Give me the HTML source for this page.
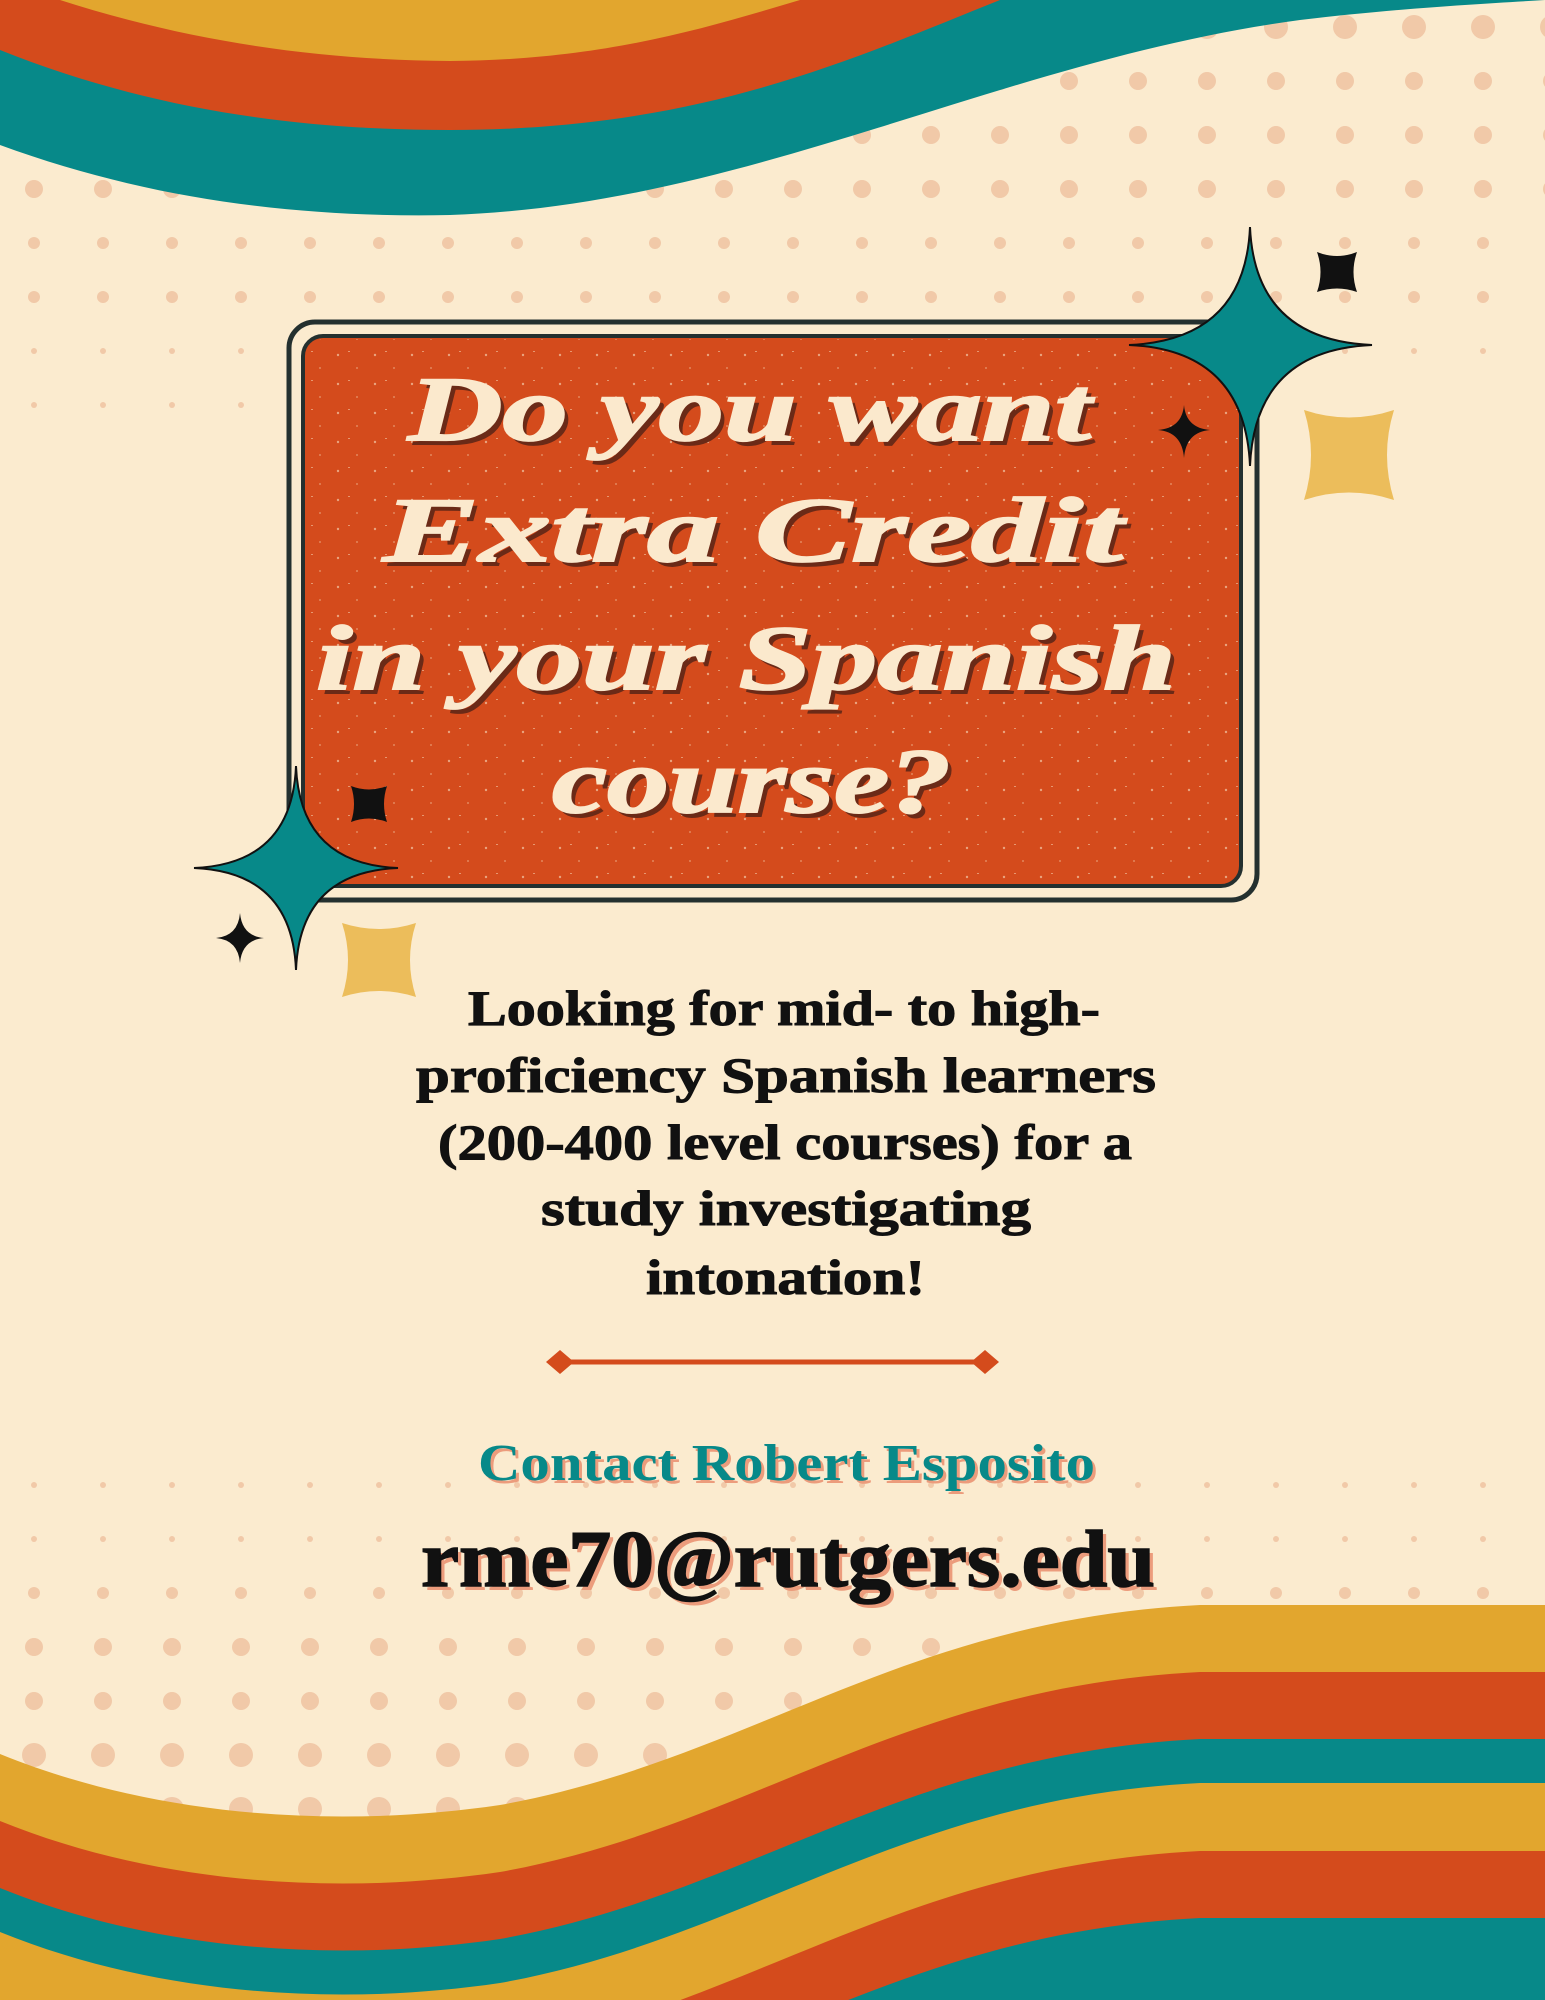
<!DOCTYPE html>
<html><head><meta charset="utf-8"><style>
html,body{margin:0;padding:0;width:1545px;height:2000px;overflow:hidden;}
body{background:#fbebcf;}
svg{display:block}
</style></head><body>
<svg width="1545" height="2000" viewBox="0 0 1545 2000" xmlns="http://www.w3.org/2000/svg">
<defs>
<pattern id="d1" width="69" height="54" patternUnits="userSpaceOnUse"><circle cx="34" cy="27" r="12" fill="#f1c9a8"/></pattern>
<pattern id="d2" width="69" height="54" patternUnits="userSpaceOnUse"><circle cx="34" cy="27" r="9" fill="#f1c9a8"/></pattern>
<pattern id="d3" width="69" height="54" patternUnits="userSpaceOnUse"><circle cx="34" cy="27" r="6" fill="#f1c9a8"/></pattern>
<pattern id="d4" width="69" height="54" patternUnits="userSpaceOnUse"><circle cx="34" cy="27" r="3" fill="#f1c9a8"/></pattern>
<pattern id="sp" width="37" height="29" patternUnits="userSpaceOnUse"><circle cx="5" cy="7" r="1.2" fill="#f3c9a8" opacity="0.7"/><circle cx="24" cy="20" r="0.9" fill="#f3c9a8" opacity="0.6"/><rect x="15" y="3" width="2" height="1" fill="#f3c9a8" opacity="0.6"/></pattern>
</defs>
<!-- dots top -->
<rect x="1080" y="8" width="465" height="54" fill="url(#d1)"/>
<rect x="600" y="62" width="945" height="54" fill="url(#d2)"/>
<rect x="500" y="116" width="1045" height="54" fill="url(#d2)"/>
<rect x="0" y="168" width="1545" height="54" fill="url(#d2)"/>
<rect x="0" y="222" width="1545" height="54" fill="url(#d3)"/>
<rect x="0" y="276" width="1545" height="54" fill="url(#d3)"/>
<rect x="0" y="330" width="1545" height="54" fill="url(#d4)"/>
<rect x="0" y="384" width="300" height="54" fill="url(#d4)"/>
<!-- dots bottom -->
<rect x="0" y="1466" width="1545" height="54" fill="url(#d4)"/>
<rect x="0" y="1520" width="1545" height="54" fill="url(#d4)"/>
<rect x="0" y="1574" width="1545" height="54" fill="url(#d3)"/>
<rect x="0" y="1628" width="1545" height="54" fill="url(#d2)"/>
<rect x="0" y="1682" width="1545" height="54" fill="url(#d2)"/>
<rect x="0" y="1736" width="1545" height="54" fill="url(#d1)"/>
<rect x="0" y="1790" width="1545" height="54" fill="url(#d1)"/>
<!-- top waves -->
<path d="M0 145 C150 200 300 218 450 215 C750 205 1000 60 1300 20 C1400 8 1480 4 1545 0 L0 0Z" fill="#078989"/>
<path d="M0 50 C150 110 300 130 450 130 C700 130 850 60 1000 0 L0 0Z" fill="#d44b1c"/>
<path d="M60 0 C200 45 330 60 450 61 C600 60 700 30 800 0Z" fill="#e2a62e"/>
<!-- bottom waves -->
<path d="M0 1754 C150 1815 330 1830 500 1805 C750 1760 900 1620 1200 1605 L1545 1605 L1545 2000 L0 2000Z" fill="#e2a62e"/>
<path transform="translate(0,67)" d="M0 1754 C150 1815 330 1830 500 1805 C750 1760 900 1620 1200 1605 L1545 1605 L1545 2000 L0 2000Z" fill="#d44b1c"/>
<path transform="translate(0,134)" d="M0 1754 C150 1815 330 1830 500 1805 C750 1760 900 1620 1200 1605 L1545 1605 L1545 2000 L0 2000Z" fill="#078989"/>
<path transform="translate(0,178)" d="M0 1754 C150 1815 330 1830 500 1805 C750 1760 900 1620 1200 1605 L1545 1605 L1545 2000 L0 2000Z" fill="#e2a62e"/>
<path transform="translate(0,246)" d="M0 1754 C150 1815 330 1830 500 1805 C750 1760 900 1620 1200 1605 L1545 1605 L1545 2000 L0 2000Z" fill="#d44b1c"/>
<path transform="translate(0,313)" d="M0 1754 C150 1815 330 1830 500 1805 C750 1760 900 1620 1200 1605 L1545 1605 L1545 2000 L0 2000Z" fill="#078989"/>
<!-- box -->
<rect x="289" y="322" width="968" height="578" rx="26" fill="#fbebcf" stroke="#24302f" stroke-width="5"/>
<rect x="303" y="336" width="938" height="550" rx="20" fill="#d44b1c" stroke="#24302f" stroke-width="4"/>
<rect x="306" y="339" width="932" height="544" rx="18" fill="url(#sp)"/>
<!-- title -->
<g font-family="Liberation Serif, serif" font-weight="bold" font-style="italic" font-size="92">
<g fill="#6b2a17" transform="translate(5,5)">
<text x="408" y="440" textLength="683" lengthAdjust="spacingAndGlyphs">Do you want</text>
<text x="383" y="561" textLength="740" lengthAdjust="spacingAndGlyphs">Extra Credit</text>
<text x="316" y="689" textLength="860" lengthAdjust="spacingAndGlyphs">in your Spanish</text>
<text x="552" y="812" textLength="399" lengthAdjust="spacingAndGlyphs">course?</text>
</g>
<g fill="#fbe9cd" stroke="#fbe9cd" stroke-width="2">
<text x="408" y="440" textLength="683" lengthAdjust="spacingAndGlyphs">Do you want</text>
<text x="383" y="561" textLength="740" lengthAdjust="spacingAndGlyphs">Extra Credit</text>
<text x="316" y="689" textLength="860" lengthAdjust="spacingAndGlyphs">in your Spanish</text>
<text x="552" y="812" textLength="399" lengthAdjust="spacingAndGlyphs">course?</text>
</g>
</g>
<!-- sparkles -->
<path d="M1250 227 Q1255 340 1372 345 Q1255 350 1250 466 Q1245 350 1129 345 Q1245 340 1250 227Z" fill="#078989" stroke="#111" stroke-width="2"/>
<path d="M296 766 Q300 864 398 868 Q300 872 296 970 Q292 872 194 868 Q292 864 296 766Z" fill="#078989" stroke="#111" stroke-width="2"/>
<path d="M1184 405 Q1186 428 1210 430 Q1186 432 1184 458 Q1182 432 1158 430 Q1182 428 1184 405Z" fill="#111"/>
<path d="M240 913 Q242 936 264 938 Q242 940 240 963 Q238 940 216 938 Q238 936 240 913Z" fill="#111"/>
<path d="M1317 252 Q1337 260 1357 252 Q1350 272 1357 292 Q1337 285 1317 292 Q1324 272 1317 252Z" fill="#111"/>
<path d="M351 786 Q369 793 387 786 Q381 804 387 822 Q369 815 351 822 Q357 804 351 786Z" fill="#111"/>
<path d="M1304 410 Q1349 425 1394 410 Q1380 455 1394 500 Q1349 485 1304 500 Q1318 455 1304 410Z" fill="#ecbd5b"/>
<path d="M342 923 Q379 935 416 923 Q404 960 416 997 Q379 985 342 997 Q354 960 342 923Z" fill="#ecbd5b"/>
<!-- body -->
<g font-family="Liberation Serif, serif" font-weight="bold" font-size="50" fill="#111" stroke="#111" stroke-width="1">
<text x="468" y="1025" textLength="632" lengthAdjust="spacingAndGlyphs">Looking for mid- to high-</text>
<text x="416" y="1092" textLength="740" lengthAdjust="spacingAndGlyphs">proficiency Spanish learners</text>
<text x="438" y="1159" textLength="694" lengthAdjust="spacingAndGlyphs">(200-400 level courses) for a</text>
<text x="541" y="1225" textLength="490" lengthAdjust="spacingAndGlyphs">study investigating</text>
<text x="646" y="1294" textLength="279" lengthAdjust="spacingAndGlyphs">intonation!</text>
</g>
<!-- divider -->
<line x1="560" y1="1362" x2="985" y2="1362" stroke="#d44b1c" stroke-width="5"/>
<path d="M546 1362 L560 1350 L574 1362 L560 1374Z" fill="#d44b1c"/>
<path d="M971 1362 L985 1350 L999 1362 L985 1374Z" fill="#d44b1c"/>
<!-- contact -->
<g font-family="Liberation Serif, serif" font-weight="bold">
<text x="481" y="1483" font-size="52" fill="#ec9c7c" textLength="617" lengthAdjust="spacingAndGlyphs">Contact Robert Esposito</text>
<text x="478" y="1480" font-size="52" fill="#078989" textLength="617" lengthAdjust="spacingAndGlyphs">Contact Robert Esposito</text>
<text x="425" y="1590" font-size="80" fill="#ec9c7c" textLength="734" lengthAdjust="spacingAndGlyphs">rme70@rutgers.edu</text>
<text x="421" y="1586" font-size="80" fill="#111" stroke="#111" stroke-width="1.5" textLength="734" lengthAdjust="spacingAndGlyphs">rme70@rutgers.edu</text>
</g>
</svg>
</body></html>
